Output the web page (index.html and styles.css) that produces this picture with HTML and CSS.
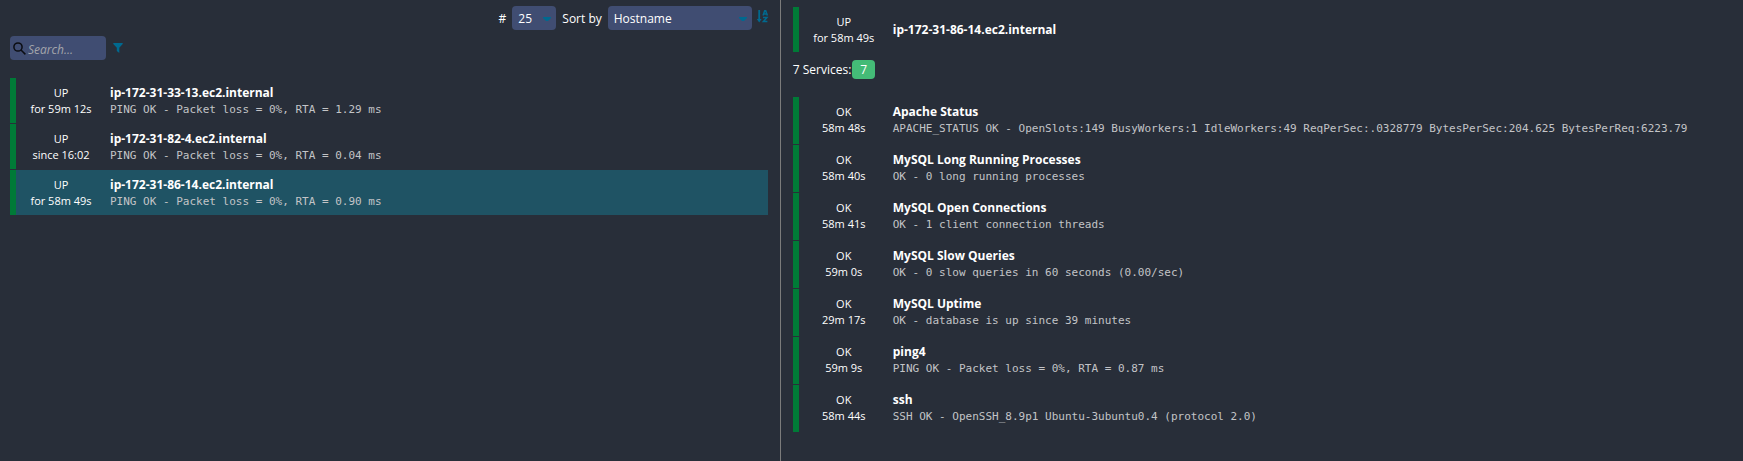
FILE: index.html
```html
<!DOCTYPE html>
<html lang="en">
<head>
<meta charset="utf-8">
<title>Hosts</title>
<meta name="viewport" content="width=device-width, initial-scale=1">
<link rel="stylesheet" href="styles.css">
</head>
<body>
<div class="layout">
  <main class="column hosts">
    <div class="controls">
      <label for="limit">#</label>
      <span class="select limit">
        <select id="limit"><option>25</option><option>50</option><option>100</option></select>
        <svg class="caret" viewBox="0 0 8 4" aria-hidden="true"><path d="M0 0h8v1L5 4H3L0 1z"/></svg>
      </span>
      <label for="sort">Sort by</label>
      <span class="select sort">
        <select id="sort"><option>Hostname</option><option>Severity</option></select>
        <svg class="caret" viewBox="0 0 8 4" aria-hidden="true"><path d="M0 0h8v1L5 4H3L0 1z"/></svg>
      </span>
      <button class="icon-button" type="button" aria-label="Sort direction">
        <svg class="sort-icon" viewBox="0 0 11 13" aria-hidden="true">
          <path d="M1.3 0h1.8v9h1.5L2.2 12.5-.2 9h1.5z" fill="currentColor"/>
          <path d="M6 5.5L7.7 .8h1l1.7 4.7M6.5 4h3.4M6 7.6h3.9L6.4 11.5h4" fill="none" stroke="currentColor" stroke-width="1.5"/>
        </svg>
      </button>
    </div>
    <form class="search">
      <span class="search-box">
        <svg class="lens" viewBox="0 0 13 13" aria-hidden="true"><circle cx="5" cy="5" r="4.1"/><path d="M8 8l4.4 4.4"/></svg>
        <input type="search" aria-label="Search" placeholder="Search...">
      </span>
      <button class="icon-button" type="button" aria-label="Filter">
        <svg class="funnel" viewBox="0 0 10 10" aria-hidden="true"><path d="M.3 0h9.4v.9L6.3 4.7V10L3.8 8V4.7L.3.9z"/></svg>
      </button>
    </form>
    <ul class="list host-list">
      <li class="item"><div class="state"><span>UP</span><span>for 59m 12s</span></div><div class="info"><a href="#">ip-172-31-33-13.ec2.internal</a><p>PING OK - Packet loss = 0%, RTA = 1.29 ms</p></div></li>
      <li class="item"><div class="state"><span>UP</span><span>since 16:02</span></div><div class="info"><a href="#">ip-172-31-82-4.ec2.internal</a><p>PING OK - Packet loss = 0%, RTA = 0.04 ms</p></div></li>
      <li class="item active"><div class="state"><span>UP</span><span>for 58m 49s</span></div><div class="info"><a href="#">ip-172-31-86-14.ec2.internal</a><p>PING OK - Packet loss = 0%, RTA = 0.90 ms</p></div></li>
    </ul>
  </main>
  <section class="column detail">
    <header class="item head"><div class="state"><span>UP</span><span>for 58m 49s</span></div><div class="info"><a href="#">ip-172-31-86-14.ec2.internal</a></div></header>
    <div class="summary"><span>7 Services:</span><a class="badge" href="#">7</a></div>
    <ul class="list service-list">
      <li class="item"><div class="state"><span>OK</span><span>58m 48s</span></div><div class="info"><a href="#">Apache Status</a><p>APACHE_STATUS OK - OpenSlots:149 BusyWorkers:1 IdleWorkers:49 ReqPerSec:.0328779 BytesPerSec:204.625 BytesPerReq:6223.79</p></div></li>
      <li class="item"><div class="state"><span>OK</span><span>58m 40s</span></div><div class="info"><a href="#">MySQL Long Running Processes</a><p>OK - 0 long running processes</p></div></li>
      <li class="item"><div class="state"><span>OK</span><span>58m 41s</span></div><div class="info"><a href="#">MySQL Open Connections</a><p>OK - 1 client connection threads</p></div></li>
      <li class="item"><div class="state"><span>OK</span><span>59m 0s</span></div><div class="info"><a href="#">MySQL Slow Queries</a><p>OK - 0 slow queries in 60 seconds (0.00/sec)</p></div></li>
      <li class="item"><div class="state"><span>OK</span><span>29m 17s</span></div><div class="info"><a href="#">MySQL Uptime</a><p>OK - database is up since 39 minutes</p></div></li>
      <li class="item"><div class="state"><span>OK</span><span>59m 9s</span></div><div class="info"><a href="#">ping4</a><p>PING OK - Packet loss = 0%, RTA = 0.87 ms</p></div></li>
      <li class="item"><div class="state"><span>OK</span><span>58m 44s</span></div><div class="info"><a href="#">ssh</a><p>SSH OK - OpenSSH_8.9p1 Ubuntu-3ubuntu0.4 (protocol 2.0)</p></div></li>
    </ul>
  </section>
</div>
</body>
</html>
```
FILE: styles.css
```css
* { box-sizing: border-box; }

body {
  margin: 0;
  background: #282e39;
  color: #fff;
  font: 12px/16px "Open Sans", "Noto Sans", sans-serif;
}

a { color: inherit; text-decoration: none; }
p { margin: 0; }

.layout {
  display: grid;
  grid-template-columns: 17fr 21fr;
  min-height: 100vh;
}

.column { min-width: 0; }
.hosts { padding: 6px 12px 0 10px; }
.detail { padding: 7px 12px 0; border-left: 1px solid #7b7b7b; }

.controls {
  display: flex;
  align-items: center;
  justify-content: flex-end;
  gap: 6px;
  height: 24px;
}

.controls label { padding-top: 1px; }

.select { position: relative; display: block; }
.limit { width: 44px; }
.sort { width: 144px; }

select,
input {
  width: 100%;
  height: 24px;
  border: 0;
  border-radius: 4px;
  background: #404d72;
  color: #fff;
  font: inherit;
  appearance: none;
  outline: 0;
}

select { display: block; padding: 2px 6px 0; }

.caret {
  position: absolute;
  right: 5px;
  top: 11px;
  width: 8px;
  height: 4px;
  fill: #00698f;
}

.icon-button {
  display: block;
  padding: 0;
  border: 0;
  background: none;
  color: #00698f;
}

.icon-button svg { display: block; }
.sort-icon { width: 11px; height: 13px; margin-bottom: 4px; overflow: visible; }
.controls .icon-button { margin-left: -1px; }

.search {
  display: flex;
  align-items: center;
  gap: 7px;
  margin-top: 6px;
}

.search-box { position: relative; width: 96px; }
.search-box input { display: block; padding: 2px 4px 0 18px; }
.search-box input::placeholder { color: #a3a5ab; font-style: italic; opacity: 1; }

.lens {
  position: absolute;
  left: 3px;
  top: 6px;
  width: 13px;
  height: 13px;
  fill: none;
  stroke: #0b0d12;
  stroke-width: 1.5;
}

.funnel { width: 10px; height: 10px; fill: currentColor; }

.list {
  display: grid;
  gap: 1px;
  margin: 0;
  padding: 0;
  list-style: none;
}

.host-list { margin-top: 18px; }
.service-list { margin-top: 18px; }

.item {
  display: flex;
  align-items: center;
  min-height: 45px;
  border-left: 6px solid #007a37;
}

.service-list .item { min-height: 47px; padding-bottom: 2px; }
.active { background: #1f5364; }

.state {
  display: flex;
  flex-direction: column;
  flex: none;
  width: 90px;
  text-align: center;
  font-size: 11px;
  font-weight: 500;
}

.info { flex: 1; min-width: 0; padding-left: 4px; }
.info a { display: block; font-weight: 700; line-height: 18px; }
.info p {
  color: #c3c4c7;
  font: 11px/16px "DejaVu Sans Mono", monospace;
}

.summary {
  display: flex;
  align-items: center;
  gap: 1px;
  margin-top: 8px;
}

.badge {
  padding: 2px 8px;
  border-radius: 4px;
  background: #44bb77;
  line-height: 15px;
}
```
